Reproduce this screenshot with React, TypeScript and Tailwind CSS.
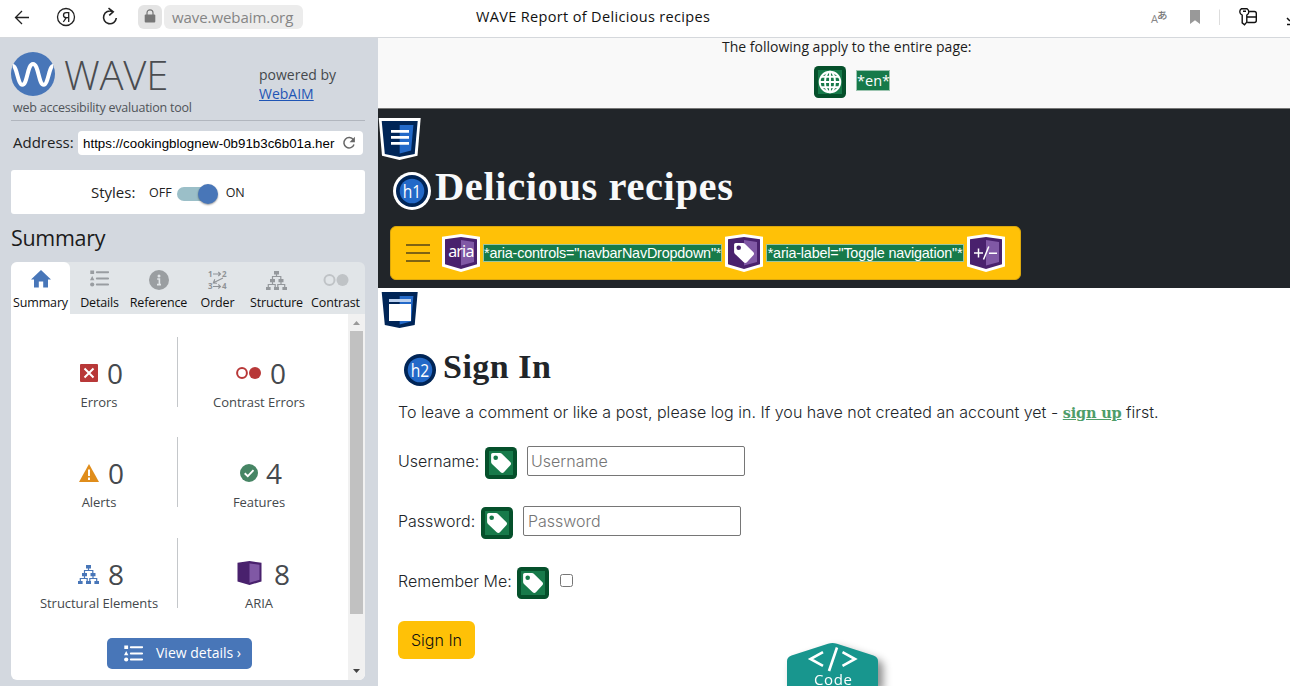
import React from "react";

const sans = "font-['Open_Sans','Noto_Sans',sans-serif]";
const inter = "font-['Inter',sans-serif]";

function StructureIcon({ className }: { className: string }) {
  return (
    <svg viewBox="0 0 21 19" className={className} fill="currentColor">
      <path d="M8 0h5v3.500H8zM4 8h5v3.200H4zM12.500 8h5v3.200h-5zM0 16h4.600v3H0zM8 16h5v3H8zM16.400 16H21v3h-4.600z" />
      <path d="M10.500 3v2.500M6.500 8.500v-3h8.300v3M6.500 11v2.500M15 11v2.500M2.300 16v-2.500h6.900V16M11.800 16v-2.500h6.900V16" fill="none" stroke="currentColor" strokeWidth="1.200" />
    </svg>
  );
}

function ListIcon({ className }: { className: string }) {
  return (
    <svg viewBox="0 0 19 17" className={className} fill="currentColor">
      <path d="M.3.500h3.800v3.600H.3zM2.200 6l2.200 4.200H0z" />
      <circle cx="2.200" cy="14.500" r="2.100" />
      <path d="M6.800 2.200h11.400M6.800 8.500h11.400M6.800 14.500h11.400" stroke="currentColor" strokeWidth="1.900" strokeLinecap="round" />
    </svg>
  );
}

function OrderIcon() {
  return (
    <svg viewBox="0 0 22 22" className="h-[22px] w-[22px]" fill="#8f9397">
      <text x="1" y="8" fontSize="8" fontWeight="700" fontFamily="Open Sans">1</text>
      <text x="15" y="8" fontSize="8" fontWeight="700" fontFamily="Open Sans">2</text>
      <text x="1" y="20" fontSize="8" fontWeight="700" fontFamily="Open Sans">3</text>
      <text x="15" y="20" fontSize="8" fontWeight="700" fontFamily="Open Sans">4</text>
      <path d="M6 5h7.500M11.300 3l2.200 2-2.200 2M6 17.500h7.500M11.300 15.500l2.200 2-2.200 2M16 9l-9.500 4.800M7.800 10.300L6.300 14l3.700.3" fill="none" stroke="#8f9397" strokeWidth="1.100" />
    </svg>
  );
}

const tagPath =
  "M7.800 6h7.200c.7 0 1.300.3 1.800.7l8.400 8.300c1.100 1.100 1.100 2.300.1 3.300l-6.400 6.900c-1 1-2.200 1-3.200 0l-8.700-8.300c-.6-.6-.9-1.200-.9-2V7.800C6.100 6.700 6.700 6 7.800 6zM10.700 8.500a2.300 2.300 0 1 0 0 4.600 2.300 2.300 0 0 0 0-4.600z";

function GreenBadge({ kind }: { kind: "tag" | "globe" }) {
  return (
    <svg viewBox="0 0 32 32" className="h-8 w-8 shrink-0">
      <rect width="32" height="32" rx="4.500" fill="#05502b" />
      <rect x="4" y="4" width="24" height="24" fill="#177a4a" />
      {kind === "tag" ? (
        <path d={tagPath} fill="#fff" fillRule="evenodd" />
      ) : (
        <g fill="none" stroke="#fff" strokeWidth="1.900">
          <circle cx="16" cy="16" r="10.300" />
          <ellipse cx="16" cy="16" rx="5" ry="10.300" />
          <path d="M16 5.500v21M5.700 16h20.600M7.300 10.700h17.400M7.300 21.300h17.400" />
        </g>
      )}
    </svg>
  );
}

function PurpleBadge({ kind }: { kind: "aria" | "tag" | "expand" }) {
  return (
    <svg viewBox="0 0 38 38" className="h-[38px] w-[38px] shrink-0">
      <path d="M0 2.700L19 0l19 2.700v29.800L19 38 0 32.500z" fill="#fff" />
      <path d="M3 5.300L19 3l16 2.300v25L19 34.900 3 30.300z" fill="#49216d" />
      <path d="M19 6l13 1.900v20.200L19 31.500z" fill="#8058a5" />
      {kind === "aria" && (
        <text x="19.200" y="22.600" textAnchor="middle" fontSize="16" fontFamily="Noto Sans" fill="#fff" textLength="26">aria</text>
      )}
      {kind === "tag" && <path d={tagPath} transform="translate(3 3)" fill="#fff" fillRule="evenodd" />}
      {kind === "expand" && <path d="M7 19h9M11.500 14.500v9M16.500 25.500l5.300-13M22 19.300h8" stroke="#fff" strokeWidth="1.500" fill="none" />}
    </svg>
  );
}

function Shield({ kind }: { kind: "header" | "main" }) {
  return (
    <svg viewBox="0 0 43 42" className="block h-[42px] w-[43px]">
      <path d="M.7 0h42l-3.200 37.700L21.500 42 4 37.700z" fill="#fff" />
      <path d="M3.700 3h36l-3 33L21.500 39 6.800 36z" fill="#002557" />
      <path d="M21.700 7h13.700l-2.300 25.500-11.400 3z" fill="#2369c8" />
      {kind === "header" ? (
        <path d="M13 12h18v2.800H13zM13 18h18v2.800H13zM13 24h18v2.800H13z" fill="#fff" />
      ) : (
        <>
          <path d="M11 10h22v3H11z" fill="#bcd1ef" />
          <path d="M11 15h22v17H11z" fill="#fff" />
        </>
      )}
    </svg>
  );
}

function HeadingBadge({ label, ring }: { label: string; ring: boolean }) {
  return (
    <svg viewBox="0 0 38 38" className="h-[38px] w-[38px] shrink-0">
      {ring && <circle cx="19" cy="19" r="19" fill="#fff" />}
      <circle cx="19" cy="19" r="16" fill="#002557" />
      <circle cx="19" cy="19" r="12.300" fill="#2369c8" />
      <text x="19" y="25.500" textAnchor="middle" fontSize="17.500" fontFamily="Open Sans" fill="#fff" textLength="18.500" lengthAdjust="spacingAndGlyphs">{label}</text>
    </svg>
  );
}

function BrowserBar() {
  return (
    <div className={`flex h-[38px] items-start border-b border-[#d5d8dc] bg-white ${sans}`}>
      <svg viewBox="0 0 138 36" className="h-9 w-[138px] shrink-0" fill="none" stroke="#222" strokeWidth="1.300">
        <path d="M29 17.500H15.500M22 11l-6.500 6.500L22 24" />
        <circle cx="66" cy="17" r="8.500" />
        <path d="M68.700 22v-9.300h-2.500c-3.600 0-3.600 4.900 0 4.900h2.500M66.300 17.700L63.300 22" />
        <path d="M112.500 11.500A6.400 6.400 0 1 0 116.300 18M108.500 8.200l4.700 3.600-4 3.500" strokeWidth="1.600" />
      </svg>
      <div className="mt-[5px] flex h-6 w-6 shrink-0 items-center justify-center rounded-[6px] bg-[#e4e4e4]">
        <svg viewBox="0 0 12 14" className="mb-0.5 h-3.5 w-3">
          <rect x=".7" y="5.500" width="10.600" height="8" rx="1" fill="#777" />
          <path d="M3 6V3.800a3 3 0 0 1 6 0V6" fill="none" stroke="#777" strokeWidth="1.200" />
        </svg>
      </div>
      <div className="mt-[5px] ml-0.5 h-6 w-[139px] shrink-0 rounded-[6px] bg-[#ececec] pl-2 text-[15px] leading-[25px] tracking-[-0.070px] whitespace-nowrap text-[#858585]">wave.webaim.org</div>
      <div className="mt-[7px] ml-[173px] w-[670px] text-[14.500px] leading-5 tracking-[0.340px] whitespace-nowrap text-[#111]">WAVE Report of Delicious recipes</div>
      <svg viewBox="0 0 144 36" className="h-9 w-36 shrink-0" fill="none">
        <text x="5" y="22.700" fontSize="11" fontFamily="Open Sans" fill="#888">A</text>
        <text x="11" y="18.800" fontSize="10.500" fontWeight="500" fontFamily="Noto Sans CJK JP" fill="#777">あ</text>
        <path d="M44 10h10v14l-5-3.700-5 3.700z" fill="#999" />
        <path d="M73.500 9.500V25" stroke="#ddd" />
        <path d="M95.500 8.700h5.600c2.400 1.700 2.300 4.900-.3 6.400v7L98.500 24.800l-2.300-1.900v-7.800c-3-1.500-3.200-4.700-.7-6.400zM97 11.200h3M103.500 11.500h4.800c1.300 0 2 .6 2 2v7c0 1.300-.7 2-2 2h-7M101.500 17h8.500" stroke="#111" strokeWidth="1.400" />
        <path d="M141 18l3 3M141 24.500h3" stroke="#111" strokeWidth="1.500" />
      </svg>
    </div>
  );
}

function Tab({ label, width, active, children }: { label: string; width: string; active?: boolean; children: React.ReactNode }) {
  return (
    <div className={`flex h-[52px] shrink-0 flex-col items-center pt-2 ${width} ${active ? "rounded-t-[6px] bg-white" : ""}`}>
      <div className="flex h-5 items-center">{children}</div>
      <div className="mt-1 text-[12.500px] leading-[18px] tracking-[-0.150px] whitespace-nowrap text-[#111]">{label}</div>
    </div>
  );
}

function Stat({ icon, value, label, gap }: { icon: React.ReactNode; value: number; label: string; gap: string }) {
  return (
    <div className="flex w-40 flex-col items-center">
      <div className={`flex h-9 items-center ${gap}`}>
        {icon}
        <span className="mb-px text-[28px] leading-9 font-normal text-[#45494e]">{value}</span>
      </div>
      <div className="mt-px text-[13px] leading-5 tracking-[-0.050px] whitespace-nowrap text-[#44484c]">{label}</div>
    </div>
  );
}

function StatRow({ left, right, height }: { left: React.ReactNode; right: React.ReactNode; height: string }) {
  return (
    <div className={`flex ${height}`}>
      <div className="h-[70px] w-[167px] shrink-0 border-r border-[#c4c7ca] pt-[18px] pl-2">{left}</div>
      <div className="pt-[18px] pl-px">{right}</div>
    </div>
  );
}

function Sidebar() {
  return (
    <aside className={`h-[648px] w-[378px] shrink-0 bg-[#d3d8df] pl-[11px] ${sans}`}>
      <div className="flex h-[83px] w-[354px] border-b border-[#b1b6be] pt-3.5">
        <div className="w-[248px]">
          <div className="flex h-[44px] items-center">
            <svg viewBox="0 0 44 44" className="h-11 w-11 shrink-0">
              <circle cx="22" cy="22" r="22" fill="#4876b8" />
              <path d="M1.800 14C6 14 6.800 32.800 11.300 32.800c5.200 0 5-20.800 10.700-20.800s5.500 20.800 10.700 20.800C37.200 32.800 38 14 42.200 14" fill="none" stroke="#fff" strokeWidth="4" />
            </svg>
            <span className="mt-0.5 ml-[9px] text-[40px] leading-[44px] font-light tracking-[-0.200px] text-[#4a4c50]">WAVE</span>
          </div>
          <div className="mt-0.5 ml-0.5 text-[12.500px] leading-5 tracking-[-0.230px] whitespace-nowrap text-[#505459]">web accessibility evaluation tool</div>
        </div>
        <div className="pt-[13px] text-[14px] leading-[19px] whitespace-nowrap text-[#44484c]">
          powered by
          <br />
          <a className="text-[#1f55b5] underline">WebAIM</a>
        </div>
      </div>
      <div className="flex h-[34px] items-end">
        <div className="w-[67px] pl-0.5 text-[15px] leading-[26px] whitespace-nowrap text-[#222]">Address:</div>
        <div className="flex h-6 w-[285px] items-center rounded-[4px] bg-white pl-[5px]">
          <div className="w-[253px] pt-px font-['Liberation_Sans',sans-serif] text-[13.300px] tracking-[0.020px] whitespace-nowrap text-black">https://cookingblognew-0b91b3c6b01a.her</div>
          <svg viewBox="0 0 14 14" className="ml-[6px] h-3.5 w-3.5">
            <path d="M11.400 3.800A5.200 5.200 0 1 0 12 8.500" fill="none" stroke="#666" strokeWidth="1.500" />
            <path d="M12.900.8v5.500H7.500z" fill="#666" />
          </svg>
        </div>
      </div>
      <div className="mt-[15px] flex h-11 w-[354px] items-center rounded-[3px] bg-white pl-20 text-[12.500px] whitespace-nowrap text-[#222]">
        <span className="w-[58px] text-[15px]">Styles:</span>
        <span className="mt-0.5">OFF</span>
        <div className="relative mt-1 ml-[5px] h-3.5 w-[38px] rounded-full bg-[#9bbfc8]">
          <div className="absolute -top-[3px] left-[21px] h-5 w-5 rounded-full bg-[#4876b8] shadow-[0_1px_2px_rgba(0,0,0,0.4)]" />
        </div>
        <span className="mt-0.5 ml-[11px]">ON</span>
      </div>
      <h2 className="mt-2 h-10 text-[21.500px] leading-[31px] tracking-[-0.300px] text-[#1b1b1b]">Summary</h2>
      <div className="flex h-[52px] w-[354px] rounded-t-[6px] bg-[#e1e5e8]">
        <Tab label="Summary" width="w-[59px]" active>
          <svg viewBox="0 0 20 18" className="mb-0.5 h-[18px] w-5"><path d="M10 0l10 9.500h-3V17.500h-4.800v-6H7.800v6H3v-8H0z" fill="#4876b8" /></svg>
        </Tab>
        <Tab label="Details" width="w-[59px]"><ListIcon className="mb-1 h-[17px] w-[19px] text-[#999da1]" /></Tab>
        <Tab label="Reference" width="w-[59px]">
          <svg viewBox="0 0 20 20" className="h-5 w-5">
            <circle cx="10" cy="10" r="10" fill="#9a9ea1" />
            <circle cx="10" cy="6" r="1.500" fill="#e1e5e8" />
            <path d="M8.200 9h2.200v5.500M8 14.600h4" stroke="#e1e5e8" strokeWidth="1.600" fill="none" />
          </svg>
        </Tab>
        <Tab label="Order" width="w-[59px]"><OrderIcon /></Tab>
        <Tab label="Structure" width="w-[59px]"><StructureIcon className="h-[19px] w-[21px] text-[#94989c]" /></Tab>
        <Tab label="Contrast" width="w-[59px]">
          <svg viewBox="0 0 26 12" className="h-3 w-[26px]">
            <circle cx="6.500" cy="6" r="5" fill="none" stroke="#bfc3c6" strokeWidth="2" />
            <circle cx="19.500" cy="6" r="6" fill="#bfc3c6" />
          </svg>
        </Tab>
      </div>
      <div className="flex h-[366px] w-[354px] overflow-hidden rounded-b-[6px] bg-white">
        <div className="w-[337px] pt-[23px]">
          <StatRow
            height="h-[100px]"
            left={<Stat gap="gap-[9px]" value={0} label="Errors" icon={
              <svg viewBox="0 0 18 18" className="ml-[5px] h-[18px] w-[18px]"><rect width="18" height="18" rx="1" fill="#b83838" /><path d="M4.500 4.500l9 9M13.500 4.500l-9 9" stroke="#fff" strokeWidth="2" /></svg>
            } />}
            right={<Stat gap="gap-[9px]" value={0} label="Contrast Errors" icon={
              <svg viewBox="0 0 25 12" className="ml-1 h-3 w-[25px]"><circle cx="6" cy="6" r="4.900" fill="none" stroke="#b83838" strokeWidth="2" /><circle cx="19" cy="6" r="6" fill="#b83838" /></svg>
            } />}
          />
          <StatRow
            height="h-[101px]"
            left={<Stat gap="gap-[9px]" value={0} label="Alerts" icon={
              <svg viewBox="0 0 20 18" className="ml-[5px] h-[18px] w-5"><path d="M10 0l10 18H0z" fill="#e08d1b" /><path d="M10 5.500v6.500M10 13.500V16" stroke="#fff" strokeWidth="2" /></svg>
            } />}
            right={<Stat gap="gap-2" value={4} label="Features" icon={
              <svg viewBox="0 0 18 18" className="ml-[4px] h-[18px] w-[18px]"><circle cx="9" cy="9" r="9" fill="#468564" /><path d="M4.700 9.200l3.100 3 5.700-6" fill="none" stroke="#fff" strokeWidth="1.900" /></svg>
            } />}
          />
          <StatRow
            height="h-[100px]"
            left={<Stat gap="gap-[9px]" value={8} label="Structural Elements" icon={<StructureIcon className="ml-1 h-[19px] w-[21px] text-[#4876b8]" />} />}
            right={<Stat gap="gap-3" value={8} label="ARIA" icon={
              <svg viewBox="0 0 25 24" className="mb-0.5 ml-[9px] h-6 w-[25px]"><path d="M.5 1.700L12.500 0l12 1.700v18.700l-12 3.600-12-3.600z" fill="#49216d" /><path d="M12.500 2.500l10 1.300v15l-10 3z" fill="#8058a5" /></svg>
            } />}
          />
          <button className="ml-24 flex h-[31px] w-[145px] items-center rounded-[5px] bg-[#4876b8] pl-[17px] text-[14px] whitespace-nowrap text-white">
            <ListIcon className="h-[17px] w-[19px]" />
            <span className="mb-0.5 ml-[13px]">View details ›</span>
          </button>
        </div>
        <div className="flex w-[17px] flex-col items-center bg-[#f1f1f1]">
          <div className="flex h-[17px] items-center"><svg viewBox="0 0 7 4" className="h-1 w-[7px]"><path d="M0 4l3.500-4L7 4z" fill="#999" /></svg></div>
          <div className="h-[283px] w-[13px] bg-[#c1c1c1]" />
          <div className="flex flex-1 items-end pb-[7px]"><svg viewBox="0 0 7 4" className="h-1 w-[7px]"><path d="M0 0l3.500 4L7 0z" fill="#444" /></svg></div>
        </div>
      </div>
    </aside>
  );
}

function Report() {
  return (
    <main className={`relative h-[648px] flex-1 overflow-hidden bg-white ${inter}`}>
      <div className={`flex h-[71px] flex-col border-b border-[#777] bg-[#f9f9f9] ${sans}`}>
        <div className="h-[19px] pl-[344px] text-[14px] leading-[18px] whitespace-nowrap text-[#1c1c1c]">The following apply to the entire page:</div>
        <div className="mt-[9px] flex pl-[436px]">
          <GreenBadge kind="globe" />
          <span className="mt-1 ml-[10px] h-[21px] w-[34px] border border-[#9cc5b0] bg-[#177a4a] text-center text-[14.500px] leading-[19px] text-white">*en*</span>
        </div>
      </div>
      <header className="h-[179px] bg-[#212529] pt-[9px]">
        <div><Shield kind="header" /></div>
        <div className="mt-[12px] ml-[15px] flex h-[38px] items-center">
          <HeadingBadge label="h1" ring />
          <h1 className="mb-[9px] ml-[4px] font-['Liberation_Serif',serif] text-[40.500px] leading-[44px] font-bold tracking-[0.600px] whitespace-nowrap text-[#f8f9fa]">Delicious recipes</h1>
        </div>
        <div className="mt-4 ml-3 flex h-[54px] w-[631px] items-center rounded-[6px] border border-[#dba80e] bg-[#ffc107] pl-[15px] font-['Liberation_Sans',sans-serif] text-[14.400px] leading-4 tracking-[-0.200px] whitespace-nowrap text-white">
          <svg viewBox="0 0 24 18" className="mr-3 h-[18px] w-6"><path d="M0 1h24M0 9h24M0 17h24" stroke="#564618" strokeWidth="1.700" /></svg>
          <PurpleBadge kind="aria" />
          <span className="mx-[3px] h-[18px] w-[239px] border border-[#9cc5a0] bg-[#177a4a] text-center">*aria-controls="navbarNavDropdown"*</span>
          <PurpleBadge kind="tag" />
          <span className="mx-[3px] h-[18px] w-[198px] border border-[#9cc5a0] bg-[#177a4a] text-center">*aria-label="Toggle navigation"*</span>
          <PurpleBadge kind="expand" />
        </div>
      </header>
      <div className="mt-px"><Shield kind="main" /></div>
      <div className="mt-5 ml-[23px] flex h-[38px] items-center">
        <HeadingBadge label="h2" ring={false} />
        <h2 className="mb-[6px] ml-[4px] font-['Liberation_Serif',serif] text-[34px] leading-[38px] font-bold tracking-[0.500px] whitespace-nowrap text-[#212529]">Sign In</h2>
      </div>
      <p className="mt-[11px] ml-5 h-6 text-[16px] leading-6 font-light tracking-[0.025px] whitespace-nowrap text-[#212529]">
        To leave a comment or like a post, please log in. If you have not created an account yet - <a className="font-['DejaVu_Serif',serif] text-[14.500px] font-bold tracking-[-0.200px] text-[#4f9d69] underline">sign up</a> first.
      </p>
      <form className="ml-5 text-[16px] font-light text-[#212529]">
        <div className="mt-[22px] flex h-[33px]">
          <label className="w-[87px] leading-[30px]">Username:</label>
          <div className="mt-px"><GreenBadge kind="tag" /></div>
          <input placeholder="Username" className="ml-[10px] h-[30px] w-[218px] rounded-[2px] border border-[#767676] px-[3px] placeholder:text-[#757575]" />
        </div>
        <div className="mt-[27px] flex h-[33px]">
          <label className="w-[83px] leading-[30px]">Password:</label>
          <div className="mt-px"><GreenBadge kind="tag" /></div>
          <input placeholder="Password" className="ml-[10px] h-[30px] w-[218px] rounded-[2px] border border-[#767676] px-1 placeholder:text-[#757575]" />
        </div>
        <div className="mt-[27px] flex h-[33px]">
          <label className="w-[119px] leading-[30px]">Remember Me:</label>
          <div className="mt-px"><GreenBadge kind="tag" /></div>
          <input type="checkbox" className="mt-2 ml-[11px] h-[13px] w-[13px]" />
        </div>
        <button type="button" className="mt-[22px] h-[38px] w-[77px] rounded-[6px] bg-[#ffc107] text-[16px] font-light whitespace-nowrap text-[#111]">Sign In</button>
      </form>
      <div className={`absolute top-[605px] left-[409px] ${sans}`}>
        <svg viewBox="0 0 100 43" className="h-[43px] w-[100px] drop-shadow-[5px_5px_4px_rgba(0,0,0,0.45)]">
          <path d="M0 43V18q0-4 4.500-5.500L41 .8q4.500-1.500 9 0l36.500 11.700Q91 14 91 18v25z" fill="#18968e" />
          <path d="M36 9.200L23.500 16 36 22.800M55.500 9.200L68 16l-12.500 6.800M50 4.500L42 28" fill="none" stroke="#fff" strokeWidth="2.600" />
          <text x="46" y="41.500" textAnchor="middle" fontSize="15" fontFamily="Open Sans" fill="#fff" textLength="38">Code</text>
        </svg>
      </div>
    </main>
  );
}

export default function App() {
  return (
    <div className="h-[686px] w-[1290px] overflow-hidden bg-white">
      <BrowserBar />
      <div className="flex">
        <Sidebar />
        <Report />
      </div>
    </div>
  );
}
